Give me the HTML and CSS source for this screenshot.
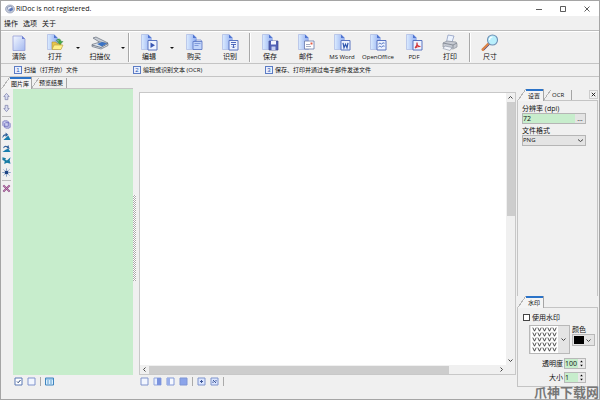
FILE: index.html
```html
<!DOCTYPE html>
<html lang="zh-CN">
<head>
<meta charset="utf-8">
<title>RiDoc</title>
<link rel="stylesheet" href="styles.css">
</head>
<body>
<svg class="defs" aria-hidden="true">
  <defs>
    <linearGradient id="paper" x1="0" y1="0" x2="1" y2="1"><stop offset="0" stop-color="#f4f8ff"/><stop offset="1" stop-color="#a3b8f0"/></linearGradient>
    <linearGradient id="sheet" x1="0" y1="0" x2="1" y2="0"><stop offset="0" stop-color="#dcecff"/><stop offset="1" stop-color="#8fabf0"/></linearGradient>
    <symbol id="doc" viewBox="0 0 18 18"><path d="M1.500.5H8l3.500 3.500V15.500h-10z" fill="url(#sheet)" stroke="#a9b9e4" stroke-width=".7"/><path d="M8 .5V4h3.500z" fill="#4f74d0"/></symbol>
    <symbol id="badge" viewBox="0 0 18 18"><path d="M8 6.500h9v9.500H8z" fill="#eef3ff" stroke="#5a74c0"/></symbol>
  </defs>
</svg>
<div class="window">
  <header class="title">
    <svg class="logo" viewBox="0 0 10 10"><ellipse cx="5" cy="5" rx="4.500" ry="4" fill="#c4cbdc" stroke="#8790a8" stroke-width=".6"/><path d="M2 3.500 6 2l2 3-4 2z" fill="#edf2ff" stroke="#647398" stroke-width=".6"/><path d="m4 5 3-1.500L8 6 5 7.500z" fill="#5a76b8"/></svg>
    <span class="name">RiDoc is not registered.</span>
    <button class="sys" aria-label="最小化"><svg viewBox="0 0 8 8"><path d="M1 4.500h6"/></svg></button>
    <button class="sys" aria-label="最大化"><svg viewBox="0 0 8 8"><path d="M1.500 1.500h5v5h-5z"/></svg></button>
    <button class="sys" aria-label="关闭"><svg viewBox="0 0 8 8"><path d="m1.500 1.500 5 5m0-5-5 5"/></svg></button>
  </header>
  <nav class="menu"><button>操作</button><button>选项</button><button>关于</button></nav>
  <div class="toolbar">
    <button class="tool"><svg viewBox="0 0 18 18"><path d="M3 2h9l3 3v11.500H3z" fill="url(#paper)" stroke="#8994d2" stroke-width=".7"/><path d="M12 2v3h3z" fill="#6f80d2"/></svg>清除</button>
    <button class="tool"><svg viewBox="0 0 18 18"><use href="#doc"/><path d="M6 8h4l1 1.500h4V15H6z" fill="#e8c54a" stroke="#ad9136" stroke-width=".6"/><path d="M6 15.500 8 11h9l-2 4.500z" fill="#fff08a" stroke="#b79c3c" stroke-width=".6"/><path d="M10 6.500c2-2.500 5-2 5 1h2l-3 3-3-3h2c0-1.500-1-1.500-3-1z" fill="#45a94a" stroke="#217a34" stroke-width=".4"/></svg>打开</button>
    <button class="drop" aria-label="打开选项"></button>
    <button class="tool"><svg viewBox="0 0 18 18"><path d="m2 4 3-1 12 6-4 2z" fill="#c9ced6" stroke="#666e7c" stroke-width=".7"/><path d="m1 10.500 8-2.500 8 1.500v2l-7 3.500-9-2.500z" fill="#dfe4ea" stroke="#646b78" stroke-width=".7"/><path d="m6 10 5-2 5 1.500-5 3z" fill="#3b73c4"/><path d="m1 11 9 2.500 7-4" fill="none" stroke="#5d6675" stroke-width=".8"/></svg>扫描仪</button>
    <button class="drop" aria-label="扫描仪选项"></button>
    <span class="sep"></span>
    <button class="tool"><svg viewBox="0 0 18 18"><use href="#doc"/><use href="#badge"/><path d="m10.500 8.500 4.500 2.700-4.500 2.800z" fill="#3957b3"/></svg>编辑</button>
    <button class="drop" aria-label="编辑选项"></button>
    <button class="tool"><svg viewBox="0 0 18 18"><use href="#doc"/><path d="M8 7.500h9v8H8z" fill="#c2d5fa" stroke="#5672c2" stroke-width=".8"/><path d="M9 7.500 11 6h5l1 1.500M9.500 9.500h6m-6 2h4" fill="none" stroke="#6483ce" stroke-width=".7"/></svg>购买</button>
    <button class="tool"><svg viewBox="0 0 18 18"><use href="#doc"/><use href="#badge"/><path d="M10 8.500h5M10 10.500h5m-2.500 0V14m-1.500-1.500 1.500 1.500 1.500-1.500" fill="none" stroke="#3d5bb5" stroke-width=".9"/></svg>识别</button>
    <span class="sep"></span>
    <button class="tool"><svg viewBox="0 0 18 18"><use href="#doc"/><path d="M8 7h9v9H8z" fill="#5362b5" stroke="#3d478f" stroke-width=".7"/><path d="M10 7h5v3.500h-5z" fill="#f5f7ff"/><path d="M10.500 12.500h4V16h-4z" fill="#c6cff0"/></svg>保存</button>
    <button class="tool"><svg viewBox="0 0 18 18"><use href="#doc"/><path d="M7.500 7h9.500v8H7.500z" fill="#fff" stroke="#6878a8" stroke-width=".8"/><path d="M9 10.500h4M9 12.500h5" stroke="#7f8aa8" stroke-width=".7"/><path d="M13.500 8.500h2v2h-2z" fill="#e45d43"/></svg>邮件</button>
    <button class="tool latin"><svg viewBox="0 0 18 18"><use href="#doc"/><use href="#badge"/><path d="m10 8.800 1 5 1.500-3.500 1.500 3.500 1-5" fill="none" stroke="#2e55ae" stroke-width="1.200"/></svg>MS Word</button>
    <button class="tool latin"><svg viewBox="0 0 18 18"><use href="#doc"/><use href="#badge"/><path d="M9.500 10c1.500-1.500 2-.5 3 .2 1-1.500 2-1.500 3-1M9.500 13c1.500-1.500 2-.5 3 .2 1-1.500 2-1.500 3-1" fill="none" stroke="#375fb8" stroke-width=".9"/></svg>OpenOffice</button>
    <button class="tool latin"><svg viewBox="0 0 18 18"><use href="#doc"/><use href="#badge"/><path d="M10 14c2-1.500 2.500-3 2-5.500-.5 2.500 1 4 3.500 4-2 0-4 .5-5.500 1.500" fill="none" stroke="#d3363b" stroke-width="1.200"/></svg>PDF</button>
    <button class="tool"><svg viewBox="0 0 18 18"><path d="m5.500 8 1.500-7 6 1-2 6z" fill="#edf4ff" stroke="#8494ba" stroke-width=".7"/><path d="m2 9 4-2 9 1 1 2v3l-4 2-10-2z" fill="#c6cad2" stroke="#8a8f9a" stroke-width=".7"/><path d="m2 9 10 2 4-2M12 11v3" fill="none" stroke="#7a808c" stroke-width=".8"/><path d="m4 12 7 1.500-2 3-7-2z" fill="#f2f4fa" stroke="#8791a2" stroke-width=".6"/></svg>打印</button>
    <span class="sep"></span>
    <button class="tool"><svg viewBox="0 0 18 18"><path d="m7.500 10-5.500 5.500" stroke="#d98348" stroke-width="3" stroke-linecap="round"/><path d="m8.500 10.500-5.500 5.500" stroke="#625e96" stroke-width=".9"/><circle cx="11.500" cy="6" r="5" fill="#b9effc" stroke="#6d8fb5" stroke-width="1.100"/><path d="M8.500 6c0-2 1.500-3 3-3" fill="none" stroke="#fff" stroke-width="1.200"/></svg>尺寸</button>
  </div>
  <div class="steps">
    <span><b>1</b>扫描（打开的）文件</span>
    <span><b>2</b>编辑或识别文本 (OCR)</span>
    <span><b>3</b>保存、打印并通过电子邮件发送文件</span>
  </div>
  <div class="work">
    <section class="left">
      <div class="tabs"><button class="tab on">图片库</button><button class="tab">预览结果</button></div>
      <div class="gallery">
        <div class="side">
          <button aria-label="上移"><svg viewBox="0 0 10 10"><path d="M5 1.500 8 5H6.500v3.500h-3V5H2z" fill="#d9dcf2" stroke="#7c80a8" stroke-width=".8"/></svg></button>
          <button aria-label="下移"><svg viewBox="0 0 10 10"><path d="M5 8.500 8 5H6.500V1.500h-3V5H2z" fill="#d9dcf2" stroke="#7c80a8" stroke-width=".8"/></svg></button>
          <hr>
          <button aria-label="复制"><svg viewBox="0 0 10 10"><path d="M2 1h4l1 1v5H2l-1-1V2zM4 3h4l1 1v4L8 9H4L3 8V4z" fill="#b9bdf0" fill-opacity=".6" stroke="#6a68b8" stroke-width=".9"/></svg></button>
          <button aria-label="向左旋转"><svg viewBox="0 0 10 10"><path d="M1.500 9h8L7 4z" fill="#187eae"/><path d="M.5 7c0-3 1-4.500 3.500-4.500V.5l3 2.500-3 2.500V4C2.500 4.500 2 5 .5 7" fill="#32619a"/></svg></button>
          <button aria-label="向右旋转"><svg viewBox="0 0 10 10"><path d="M.5 9h9L7 5 4 6.500z" fill="#187eae"/><path d="M1 5C1.500 2 4 1 6 2.500L7 1l1.500 4.500L5 4.500l.5-1C4 3 3 3.500 1 5" fill="#32619a"/></svg></button>
          <button aria-label="翻转"><svg viewBox="0 0 10 10"><path d="m.5 1.500 4 1-1 1.500 2 1L9.500 1.500 8.500 5l1 3.500-4-1-3 1.500.5-3.500L.5 4.500z" fill="#187ca4"/></svg></button>
          <button aria-label="亮度"><svg viewBox="0 0 10 10"><circle cx="5" cy="5" r="2.200" fill="#1d4484"/><path d="M5 .5v1.500m0 6v1.500M.5 5H2m6 0h1.500M1.800 1.800l1 1m4.400 4.400 1 1m0-6.400-1 1m-4.400 4.400-1 1" stroke="#5d85b6"/></svg></button>
          <hr>
          <button aria-label="删除"><svg viewBox="0 0 10 10"><path d="m1.500 1.500 7 7m0-7-7 7" stroke="#8f4c88" stroke-width="2.200"/><path d="m2 2 6 6m0-6-6 6" stroke="#dba1c4" stroke-width=".7"/></svg></button>
        </div>
        <div class="thumbs"></div>
      </div>
      <div class="bar first">
        <button aria-label="全选"><svg viewBox="0 0 9 9"><path d="M1 1h7v7H1z" fill="#fff" stroke="#5a78b4"/><path d="m3 4.500 1.200 1.200L6.500 3" fill="none" stroke="#223e73"/></svg></button>
        <button aria-label="取消选择"><svg viewBox="0 0 9 9"><path d="M1 1h7v7H1z" fill="#f2f6ff" stroke="#8094cc"/></svg></button>
        <i></i>
        <button aria-label="列表"><svg viewBox="0 0 9 9"><path d="M.5 1h8v7h-8z" fill="#dceefc" stroke="#3f85bf"/><path d="M2 4h2m1 0h2M2 6h2m1 0h2M1 2h7" stroke="#5c9fd2"/></svg></button>
      </div>
    </section>
    <div class="split"><span></span></div>
    <section class="center">
      <div class="page">
        <div class="canvas"></div>
        <div class="vbar"><svg viewBox="0 0 9 9"><path d="m2.500 5.500 2-2 2 2"/></svg><span></span><svg viewBox="0 0 9 9"><path d="m2.500 3.500 2 2 2-2"/></svg></div>
        <div class="hbar"><svg viewBox="0 0 9 9"><path d="m5.500 2.500-2 2 2 2"/></svg><span></span><svg viewBox="0 0 9 9"><path d="m3.500 2.500 2 2-2 2"/></svg></div>
      </div>
      <div class="bar wide">
        <button aria-label="单页"><svg viewBox="0 0 9 9"><path d="M1 1h7v7H1z" fill="#f2f6ff" stroke="#8094cc"/></svg></button>
        <button aria-label="右侧"><svg viewBox="0 0 9 9"><path d="M1 1h7v7H1z" fill="#e6eeff" stroke="#93a6dc"/><path d="M4 1h4v7H4z" fill="#7b93de"/></svg></button>
        <button aria-label="左侧"><svg viewBox="0 0 9 9"><path d="M1 1h7v7H1z" fill="#f5f8ff" stroke="#8399d6"/><path d="M1 1h3v7H1z" fill="#9aafea"/></svg></button>
        <button aria-label="整页"><svg viewBox="0 0 9 9"><path d="M1 1h7v7H1z" fill="#8ba4ea" stroke="#7f95d4"/></svg></button>
        <i></i>
        <button aria-label="适合页面"><svg viewBox="0 0 9 9"><path d="M1 1h7v7H1z" fill="#dce6ff" stroke="#7f94cc"/><path d="M4.500 3v3M3 4.500h3" stroke="#3d5798"/></svg></button>
        <button aria-label="适合宽度"><svg viewBox="0 0 9 9"><path d="M1 1h7v7H1z" fill="#dce6ff" stroke="#7f94cc"/><path d="m3 3 3 3M3 6V4.500M6 3v1.500" stroke="#3d5798"/></svg></button>
        <i></i>
      </div>
    </section>
    <aside class="right">
      <div class="tabs"><button class="tab on">设置</button><button class="tab mid">OCR</button><button class="close" aria-label="关闭面板"><svg viewBox="0 0 8 8"><path d="m2 2 4 4m0-4-4 4"/></svg></button></div>
      <div class="panel grow">
        <label for="dpi">分辨率 (dpi)</label>
        <div class="field"><input id="dpi" value="72"><button aria-label="选择分辨率">…</button></div>
        <label for="fmt">文件格式</label>
        <select id="fmt" class="combo"><option>PNG</option></select>
      </div>
      <div class="tabs"><button class="tab on">水印</button></div>
      <div class="panel mark">
        <label class="check"><input type="checkbox">使用水印</label>
        <div class="pick">
          <button class="pattern" aria-label="水印图案"><svg viewBox="0 0 27 27"><defs><pattern id="vees" width="5" height="5" patternUnits="userSpaceOnUse"><path d="m.8.600 1.700 3.600L4.200.600" fill="none" stroke="#222" stroke-width=".8"/></pattern></defs><path d="M0 0h27v27H0z" fill="#fff"/><path d="M0 0h25v25H0z" fill="url(#vees)" transform="translate(1 1)"/></svg><svg class="chev" viewBox="0 0 9 9"><path d="m2.500 3.500 2 2 2-2"/></svg></button>
          <div class="color"><span>颜色</span><button aria-label="颜色"><em></em><svg class="chev" viewBox="0 0 9 9"><path d="m2.500 3.500 2 2 2-2"/></svg></button></div>
        </div>
        <div class="row"><label for="op">透明度</label><div class="spin"><input id="op" value="100"><button aria-label="调整透明度"><svg viewBox="0 0 8 10"><path d="m2.500 3.500 1.500-2 1.500 2zM2.500 6.500l1.500 2 1.500-2z"/></svg></button></div></div>
        <div class="row"><label for="size">大小</label><div class="spin"><input id="size" value="1"><button aria-label="调整大小"><svg viewBox="0 0 8 10"><path d="m2.500 3.500 1.500-2 1.500 2zM2.500 6.500l1.500 2 1.500-2z"/></svg></button></div></div>
      </div>
    </aside>
  </div>
  <div class="stamp">爪神下载网</div>
</div>
</body>
</html>
```
FILE: styles.css
```css
* { box-sizing: border-box; }
body { margin: 0; color: #111; font: 7px/9px "Open Sans", "Noto Sans CJK SC", sans-serif; }
button, input, select { margin: 0; padding: 0; border: 0; border-radius: 0; background: none; color: inherit; font: inherit; }
svg { display: block; flex: none; }
.defs { position: absolute; width: 0; height: 0; }
.window { position: relative; display: flex; flex-direction: column; height: 100vh; background: #f0f0f0; border: 1px solid #a5a5a5; overflow: hidden; }

.title { display: flex; align-items: center; height: 15px; padding-left: 4px; background: #fff; }
.logo { width: 10px; height: 10px; }
.name { flex: 1; padding-left: 1px; font: 7px/12px "Open Sans", sans-serif; }
.sys { display: flex; justify-content: center; width: 24px; }
.sys svg { width: 8px; height: 8px; fill: none; stroke: #333; stroke-width: .8; }
.menu { display: flex; gap: 5px; height: 15px; padding-left: 3px; border-bottom: 1px solid #bcbcbc; }
.menu button { white-space: nowrap; }

.toolbar { display: flex; height: 32px; border-top: 1px solid #fff; }
.tool { display: flex; flex-direction: column; align-items: center; justify-content: flex-end; width: 36px; padding-bottom: 2px; line-height: 8px; white-space: nowrap; }
.latin { font-size: 6px; }
.tool svg { width: 18px; height: 18px; margin-bottom: 1px; }
.drop { display: flex; align-items: center; justify-content: center; width: 9px; }
.drop::after { content: ""; border: 2px solid transparent; border-top-color: #111; border-bottom: 0; }
.sep { width: 4px; margin: 1px 0; background: linear-gradient(90deg, transparent 1px, #a8a8a8 1px 2px, #fff 2px 3px, transparent 3px); }

.steps { display: grid; grid-template-columns: 119px 132px 1fr; align-items: center; height: 14px; padding-left: 13px; border: 1px solid #c4c4c4; border-width: 1px 0; font-size: 6px; white-space: nowrap; }
.steps span { display: flex; align-items: center; gap: 2px; }
.steps b { width: 8px; height: 8px; border: 1px solid #5c7cc4; background: #e9f0ff; color: #2c55b0; font: 6px/6px "Liberation Sans", sans-serif; text-align: center; }

.work { display: flex; flex: 1; min-height: 0; }
.left { display: flex; flex-direction: column; width: 132px; }
.tabs { display: flex; align-items: flex-end; height: 12px; padding-left: 1px; border-bottom: 1px solid #c4c4c4; flex: none; }
.tab { height: 10px; padding: 0 3px 0 7px; border-right: 1px solid #a5a5a5; background: linear-gradient(125deg, transparent 5px, #b5b5b5 5px 6px, #f0f0f0 6px); font-size: 6px; line-height: 10px; white-space: nowrap; }
.tab.on { height: 12px; margin-bottom: -1px; padding: 0 2px 0 9px; background: linear-gradient(#2b73c8, #2b73c8) 8px 0 / 100% 2px no-repeat, linear-gradient(125deg, transparent 6px, #b5b5b5 6px 7px, #f4f4f4 7px); line-height: 14px; }
.gallery { display: flex; flex: 1; }
.side { width: 12px; padding-top: 1px; }
.side button { display: flex; align-items: center; justify-content: center; width: 10px; height: 12px; }
.side svg { width: 9px; height: 9px; }
.side hr { width: 9px; margin: 2px 0 1px 1px; border: 0; border-top: 1px solid #bcbcbc; }
.thumbs { flex: 1; background: #c7edcc; }
.bar { display: flex; align-items: center; gap: 4px; height: 24px; padding-bottom: 12px; flex: none; }
.bar svg { width: 9px; height: 9px; }
.bar i { width: 1px; height: 9px; background: #aaa; }
.first { padding-left: 13px; }
.wide { padding-left: 1px; }
.split { display: flex; align-items: center; width: 6px; }
.split span { width: 3px; height: 86px; background: repeating-conic-gradient(#aaa 0 25%, #fff 0 50%) 0 0 / 2px 2px; }
.center { display: flex; flex: 1; flex-direction: column; min-width: 0; padding-top: 15px; }
.page { display: grid; flex: 1; grid-template: 1fr 9px / 1fr 9px; border: 1px solid #c8c8c8; }
.canvas { background: #fff; }
.vbar { display: flex; flex-direction: column; align-items: center; }
.hbar { display: flex; align-items: center; }
.vbar span { width: 8px; height: 42%; background: #cdcdcd; margin-bottom: auto; }
.hbar span { width: 82%; height: 8px; background: #cdcdcd; margin-right: auto; }
.vbar svg, .hbar svg, .chev { width: 9px; height: 9px; fill: none; stroke: #444; }

.right { display: flex; flex-direction: column; width: 83px; padding: 12px 1px; }
.right .tab { padding: 0 7px 0 8px; }
.right .tab.on { padding: 0 3px 0 10px; font-size: 6px; }
.close { width: 9px; height: 9px; margin: 0 0 1px auto; border: 1px solid #ccc; }
.close svg { width: 7px; height: 7px; fill: none; stroke: #111; }
.panel { display: flex; flex-direction: column; padding: 3px 11px 0 4px; border: 1px solid #c4c4c4; border-width: 0 1px; }
.grow { flex: 1; }
.field { display: flex; height: 11px; margin-bottom: 2px; border: 1px solid #b5b5b5; background: #c7edcc; }
input { min-width: 0; width: 100%; }
.field button { width: 10px; background: #e4e4e4; line-height: 5px; flex: none; }
.combo { appearance: none; width: 100%; height: 11px; border: 1px solid #b5b5b5; background: #e4e4e4 url("data:image/svg+xml,%3Csvg xmlns='http://www.w3.org/2000/svg' viewBox='0 0 9 9'%3E%3Cpath d='m2 3.500 2.500 2 2.500-2' fill='none' stroke='%23444'/%3E%3C/svg%3E") no-repeat right center / 9px 9px; font-size: 6px; line-height: 9px; }
.mark { gap: 3px; padding: 5px 2px 3px 5px; border-bottom-width: 1px; }
.check { display: flex; align-items: center; gap: 2px; }
.check input { appearance: none; width: 7px; height: 7px; border: 1px solid #444; background: #fff; flex: none; }
.pick { display: flex; justify-content: space-between; margin: 0 0 1px 6px; }
.pattern { display: flex; align-items: center; width: 41px; height: 29px; border: 1px solid #b8b8b8; background: #e4e4e4; }
.pattern svg:first-child { width: 29px; height: 27px; }
.color { display: flex; flex-direction: column; width: 23px; }
.color button { display: flex; align-items: center; height: 12px; padding-left: 1px; border: 1px solid #b8b8b8; background: #e4e4e4; }
.color em { width: 10px; height: 8px; background: #000; }
.row { display: flex; align-items: center; justify-content: flex-end; gap: 1px; padding-right: 9px; }
.spin { display: flex; width: 22px; height: 11px; border: 1px solid #b8b8b8; background: #c7edcc; }
.spin button { width: 7px; background: #e8e8e8; flex: none; }
.spin svg { width: 7px; height: 9px; }
.stamp { position: absolute; right: 0; bottom: 0; color: #777; font: bold 13px/14px "Noto Sans CJK SC", sans-serif; }
```
